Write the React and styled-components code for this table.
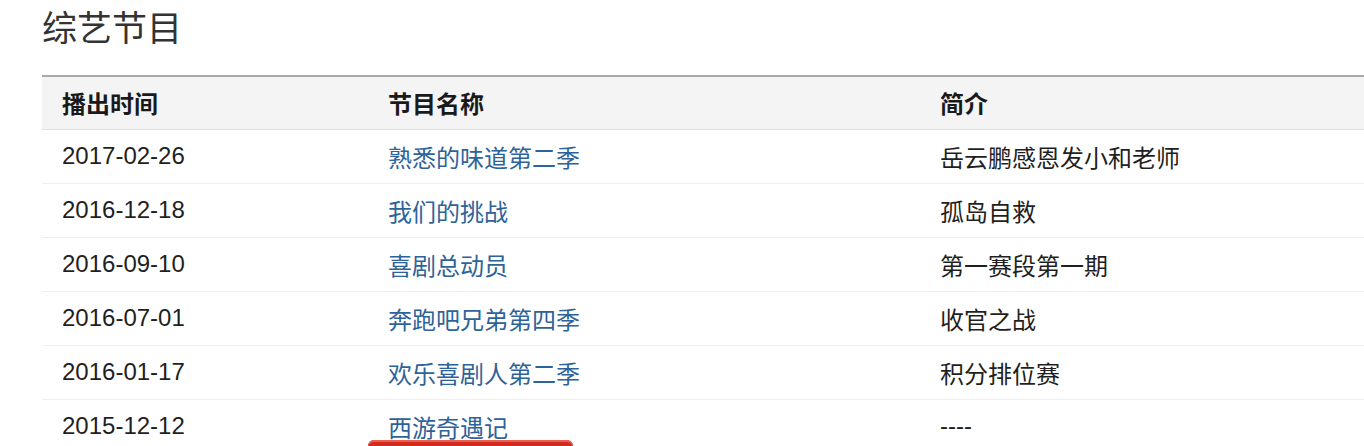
import React from 'react'
import styled, { createGlobalStyle } from 'styled-components'

const GlobalStyle = createGlobalStyle`
    body {
        margin: 0;
        background: #ffffff;
        font-family: "Liberation Sans", "Noto Sans CJK SC", sans-serif;
        color: #222;
    }
`

const Page = styled.div`
    width: 1364px;
    height: 446px;
    overflow: hidden;
    padding-left: 42px;
    box-sizing: border-box;
`

const Title = styled.h2`
    margin: 0;
    padding-top: 9px;
    height: 75px;
    box-sizing: border-box;
    font-size: 35px;
    line-height: 40px;
    font-weight: 400;
    color: #333;
`

const Table = styled.table`
    width: 100%;
    border-collapse: collapse;
    border-top: 2px solid #a9a9a9;
    table-layout: fixed;
`

const HeadCell = styled.th`
    width: ${props => props.w || 'auto'};
    height: 53px;
    padding: 0 20px;
    text-align: left;
    font-size: 24px;
    font-weight: 700;
    color: #1a1a1a;
    background: #f4f4f5;
    border-bottom: 1px solid #dcdfe3;
    box-sizing: border-box;
`

const Row = styled.tr`
    border-bottom: 1px solid #eceef0;
`

const Cell = styled.td`
    position: relative;
    height: 53px;
    padding: 0 20px;
    font-size: 24px;
    color: ${props => props.link ? '#2e6399' : '#1f1f1f'};
    white-space: nowrap;
`

const Marker = styled.div`
    position: absolute;
    left: 0;
    top: 40px;
    width: 205px;
    height: 24px;
    border-radius: 6px;
    background: #d32a20;
    box-shadow: inset 0 2px 0 #e86050;
`

const shows = [
    { date: '2017-02-26', name: '熟悉的味道第二季', desc: '岳云鹏感恩发小和老师' },
    { date: '2016-12-18', name: '我们的挑战', desc: '孤岛自救' },
    { date: '2016-09-10', name: '喜剧总动员', desc: '第一赛段第一期' },
    { date: '2016-07-01', name: '奔跑吧兄弟第四季', desc: '收官之战' },
    { date: '2016-01-17', name: '欢乐喜剧人第二季', desc: '积分排位赛' },
    { date: '2015-12-12', name: '西游奇遇记', desc: '----', mark: true },
]

const App = () => {
    return (
        <Page>
            <GlobalStyle />
            <Title>综艺节目</Title>
            <Table>
                <thead>
                    <tr>
                        <HeadCell w="326px">播出时间</HeadCell>
                        <HeadCell w="552px">节目名称</HeadCell>
                        <HeadCell>简介</HeadCell>
                    </tr>
                </thead>
                <tbody>
                    {shows.map((item) =>
                        <Row key={item.date}>
                            <Cell>{item.date}</Cell>
                            <Cell link>
                                {item.name}
                                {item.mark && <Marker />}
                            </Cell>
                            <Cell>{item.desc}</Cell>
                        </Row>
                    )}
                </tbody>
            </Table>
        </Page>
    )
}

export default App;
